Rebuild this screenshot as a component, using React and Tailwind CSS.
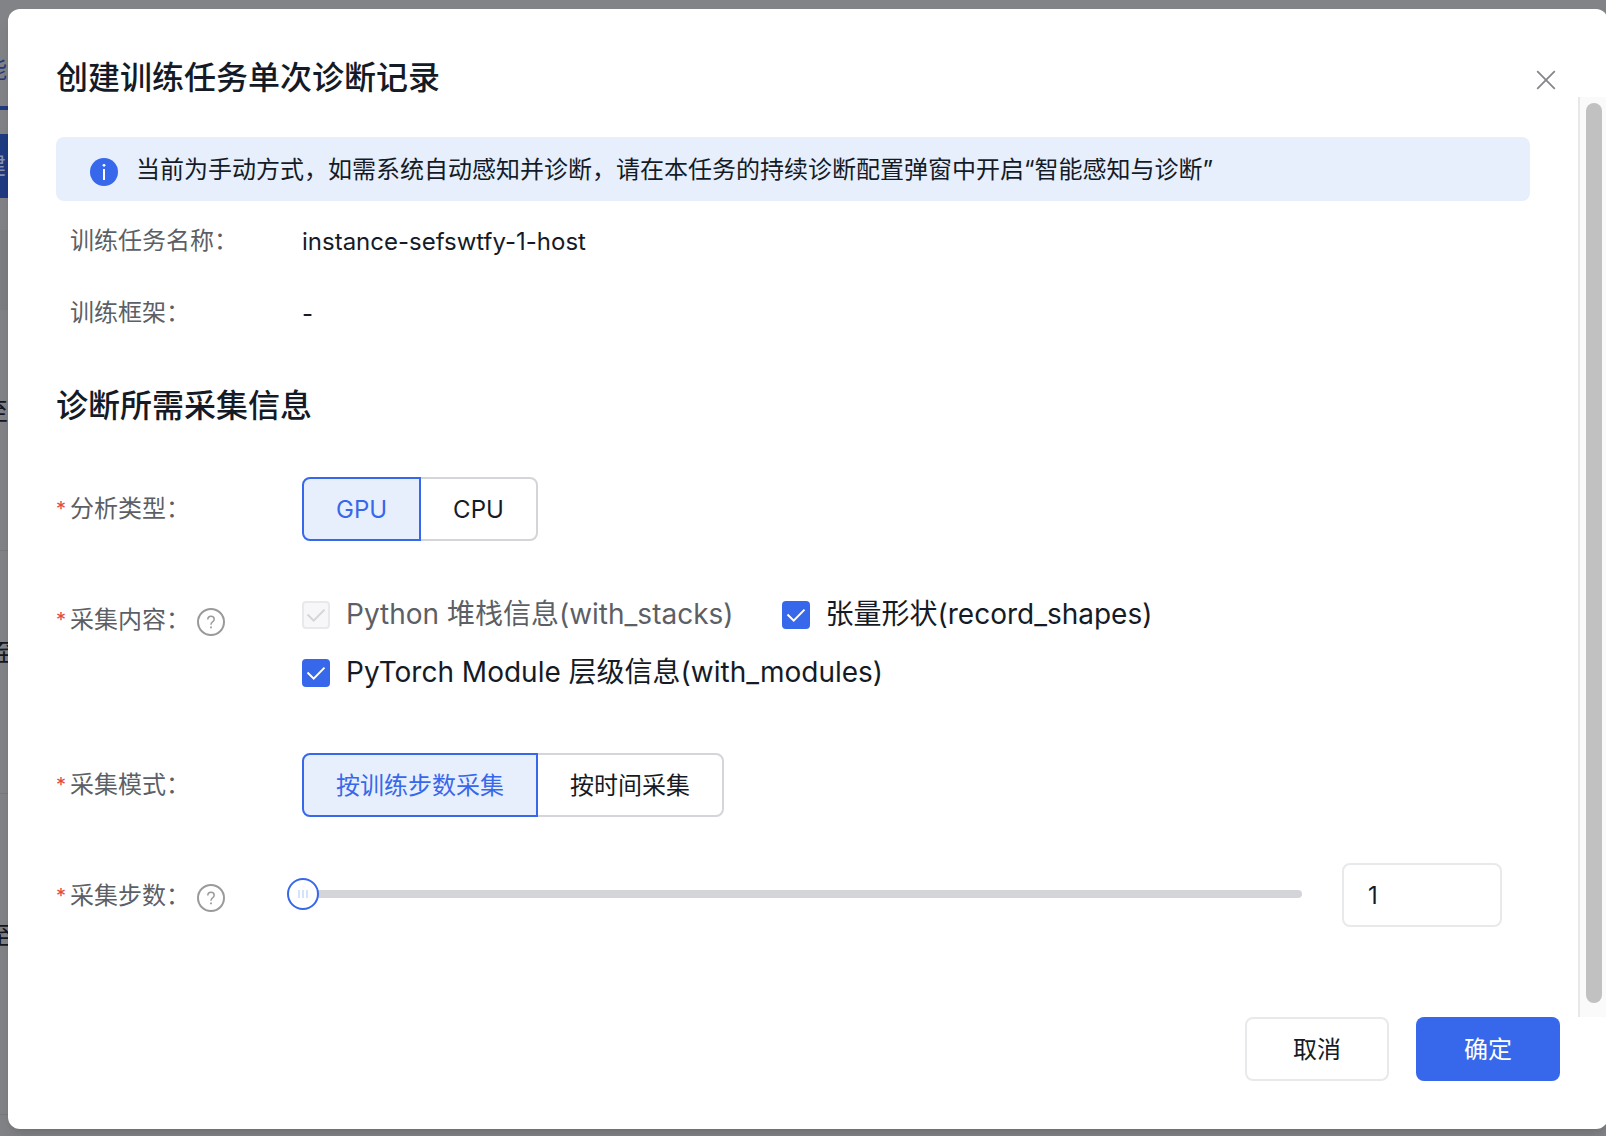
import React, { useState } from "react";

const label24 = "text-[24px] leading-[36px]";

function BackdropStrip() {
  return (
    <div
      aria-hidden="true"
      className="flex w-2 shrink-0 flex-col overflow-hidden whitespace-nowrap text-[24px] leading-[36px] text-[#14171f]"
    >
      <div className="mt-[52px] flex h-[58px] shrink-0 justify-end border-b-4 border-[#1f3a82] pr-px text-[#1f3a82]">
        <span>能</span>
      </div>
      <div className="mt-6 flex h-16 shrink-0 items-center justify-end bg-[#1f3a82] pr-0.5 text-[#8a93ad]">
        <span>建</span>
      </div>
      <div className="mt-8 h-20 shrink-0 bg-[#7c7d80]" />
      <div className="flex h-[241px] shrink-0 justify-end border-b border-[#797a7d] pt-[84px]">
        <span>至</span>
      </div>
      <div className="flex h-[243px] shrink-0 justify-end border-b border-[#797a7d] pt-[84px]">
        <span className="-mr-2">至</span>
      </div>
      <div className="flex h-[321px] shrink-0 justify-end border-b border-[#797a7d] pt-[124px]">
        <span className="-mr-1">至</span>
      </div>
    </div>
  );
}

function FieldLabel({ children, required, help, htmlFor }) {
  const text = `${children}\uFF1A`;
  return (
    <div className={`flex w-[246px] shrink-0 items-center text-[#5c5f66] ${label24}`}>
      <span className="w-[14px] text-[20px] text-[#e5483f]">{required ? "*" : ""}</span>
      {htmlFor ? <label htmlFor={htmlFor}>{text}</label> : <span>{text}</span>}
      {help && (
        <button type="button" aria-label="帮助" className="mt-1 ml-[7px]">
          <svg width="28" height="28" viewBox="0 0 28 28" fill="none" stroke="#999a9c">
            <circle cx="14" cy="14" r="13" strokeWidth="2" />
            <path d="M10.8 11.6c0-2 1.3-3.3 3.2-3.3s3.2 1.2 3.2 3c0 1.5-.9 2.1-1.9 2.9-.9.7-1.3 1.2-1.3 2.5" strokeWidth="1.5" />
            <path d="M14 18.4v1.8" strokeWidth="1.8" />
          </svg>
        </button>
      )}
    </div>
  );
}

function Segmented({ options, value, onChange, label }) {
  return (
    <div role="group" aria-label={label} className="flex">
      {options.map((o, i) => {
        const on = o === value;
        return (
          <button
            key={o}
            type="button"
            aria-pressed={on}
            onClick={() => onChange(o)}
            className={`h-16 border-2 px-8 pt-0.5 text-[24px] leading-[36px] ${
              i === 0 ? "rounded-l-lg" : "-ml-0.5 rounded-r-lg"
            } ${
              on
                ? "relative border-[#3767eb] bg-[#e7effd] text-[#3767eb]"
                : "border-[#d4d5d9] bg-white text-[#151b26]"
            }`}
          >
            {o}
          </button>
        );
      })}
    </div>
  );
}

function Check({ id, children, disabled, defaultChecked }) {
  return (
    <label
      htmlFor={id}
      className={`flex items-center gap-4 text-[28px] leading-[42px] ${
        disabled ? "text-[#5c5f66]" : "text-[#151b26]"
      }`}
    >
      <span className="mt-0.5 grid size-7">
        <input
          id={id}
          type="checkbox"
          disabled={disabled}
          defaultChecked={defaultChecked}
          className="peer col-start-1 row-start-1 size-7 appearance-none rounded border-2 border-[#d4d5d9] bg-white checked:border-[#3767eb] checked:bg-[#3767eb] disabled:border-[#e8e9eb] disabled:bg-[#f7f7f9]"
        />
        <svg
          viewBox="0 0 28 28"
          fill="none"
          strokeWidth="2"
          className="pointer-events-none col-start-1 row-start-1 size-7 stroke-white peer-disabled:stroke-[#d4d5d9]"
        >
          <path d="M5.5 13.5l6.2 6.2L22.5 8.6" />
        </svg>
      </span>
      <span>{children}</span>
    </label>
  );
}

export default function App() {
  const [type, setType] = useState("GPU");
  const [mode, setMode] = useState("按训练步数采集");
  const [steps, setSteps] = useState(1);

  return (
    <div className="flex min-h-screen overflow-hidden bg-[#828386] font-['Inter','Noto_Sans_CJK_SC',sans-serif]">
      <BackdropStrip />
      <div
        role="dialog"
        aria-labelledby="dialog-title"
        className="mt-[9px] -mr-0.5 mb-[7px] flex flex-1 flex-col overflow-hidden rounded-xl bg-white text-[#151b26] shadow-lg"
      >
        <header className="flex h-[88px] items-end justify-between pr-[52px] pl-12">
          <h1 id="dialog-title" className="text-[32px] leading-[38px] font-medium">
            创建训练任务单次诊断记录
          </h1>
          <button type="button" aria-label="关闭" className="mb-[7px]">
            <svg width="20" height="20" viewBox="0 0 20 20" stroke="#84868c" strokeWidth="1.8">
              <path d="M1.2 1.2l17.6 17.6M18.8 1.2L1.2 18.8" />
            </svg>
          </button>
        </header>

        <div className="flex h-[920px]">
          <div className="flex flex-1 flex-col pr-12 pl-12">
            <div className="mt-10 flex h-16 items-center rounded-lg bg-[#e7effd] pl-[34px]">
              <svg width="28" height="28" viewBox="0 0 28 28" className="mt-1.5">
                <circle cx="14" cy="14" r="14" fill="#3767eb" />
                <path d="M14 11v11" stroke="#fff" strokeWidth="2" />
                <circle cx="14" cy="7.3" r="1.4" fill="#fff" />
              </svg>
              <p className={`mt-0.5 ml-[18px] ${label24}`}>
                {"当前为手动方式\uFF0C如需系统自动感知并诊断\uFF0C请在本任务的持续诊断配置弹窗中开启“智能感知与诊断”"}
              </p>
            </div>

            <dl className="mt-[22px] flex flex-col gap-[34px]">
              <div className="flex">
                <dt><FieldLabel>训练任务名称</FieldLabel></dt>
                <dd className="text-[24px] leading-[38px]">instance-sefswtfy-1-host</dd>
              </div>
              <div className="flex">
                <dt><FieldLabel>训练框架</FieldLabel></dt>
                <dd className="text-[24px] leading-[38px]">-</dd>
              </div>
            </dl>

            <h2 className="mt-[51px] text-[32px] leading-[44px] font-medium">诊断所需采集信息</h2>

            <div className="mt-[49px] flex h-16 items-center">
              <FieldLabel required>分析类型</FieldLabel>
              <Segmented label="分析类型" options={["GPU", "CPU"]} value={type} onChange={setType} />
            </div>

            <div className="mt-[52px] flex items-start">
              <div className="pt-[9px]">
                <FieldLabel required help>采集内容</FieldLabel>
              </div>
              <div className="flex flex-1 flex-wrap gap-x-12 gap-y-4">
                <Check id="stacks" disabled defaultChecked>Python 堆栈信息(with_stacks)</Check>
                <Check id="shapes" defaultChecked>张量形状(record_shapes)</Check>
                <Check id="modules" defaultChecked>PyTorch Module 层级信息(with_modules)</Check>
              </div>
            </div>

            <div className="mt-[60px] flex h-16 items-center">
              <FieldLabel required>采集模式</FieldLabel>
              <Segmented
                label="采集模式"
                options={["按训练步数采集", "按时间采集"]}
                value={mode}
                onChange={setMode}
              />
            </div>

            <div className="mt-[46px] flex h-16 items-center pr-7">
              <div className="pt-0.5">
                <FieldLabel required help htmlFor="steps">采集步数</FieldLabel>
              </div>
              <div className="-ml-[15px] grid flex-1 items-center pb-0.5">
                <div className="col-start-1 row-start-1 ml-4 h-2 rounded-full bg-[#d4d5d9]" />
                <input
                  type="range"
                  aria-label="采集步数"
                  min="1"
                  max="100"
                  value={steps}
                  onChange={(e) => setSteps(Number(e.target.value))}
                  className="relative col-start-1 row-start-1 h-8 w-full appearance-none bg-transparent [&::-webkit-slider-thumb]:size-8 [&::-webkit-slider-thumb]:appearance-none [&::-webkit-slider-thumb]:rounded-full [&::-webkit-slider-thumb]:border-2 [&::-webkit-slider-thumb]:border-[#3767eb] [&::-webkit-slider-thumb]:bg-white [&::-webkit-slider-thumb]:bg-[repeating-linear-gradient(90deg,#d4e2fc_0_2px,transparent_2px_4px)] [&::-webkit-slider-thumb]:bg-[length:10px_8px] [&::-webkit-slider-thumb]:bg-center [&::-webkit-slider-thumb]:bg-no-repeat"
                />
              </div>
              <input
                id="steps"
                type="text"
                value={steps}
                onChange={(e) => setSteps(Number(e.target.value) || 1)}
                className="ml-10 h-16 w-40 rounded-lg border-2 border-[#e8e9eb] pl-6 text-[24px] leading-[36px]"
              />
            </div>
          </div>

          <div className="w-[30px] shrink-0 border-l-2 border-[#e8e8e8] bg-[#fafafa] px-1.5 pt-1.5">
            <div className="h-[900px] w-4 rounded-full bg-[#c1c1c1]" />
          </div>
        </div>

        <footer className="flex flex-1 items-start justify-end gap-[27px] pr-12 pb-12 text-[24px] leading-[36px]">
          <button type="button" className="h-16 w-36 rounded-lg border-2 border-[#e8e9eb] bg-white pt-0.5">取消</button>
          <button type="button" className="h-16 w-36 rounded-lg bg-[#3767eb] pt-0.5 text-white">确定</button>
        </footer>
      </div>
    </div>
  );
}
